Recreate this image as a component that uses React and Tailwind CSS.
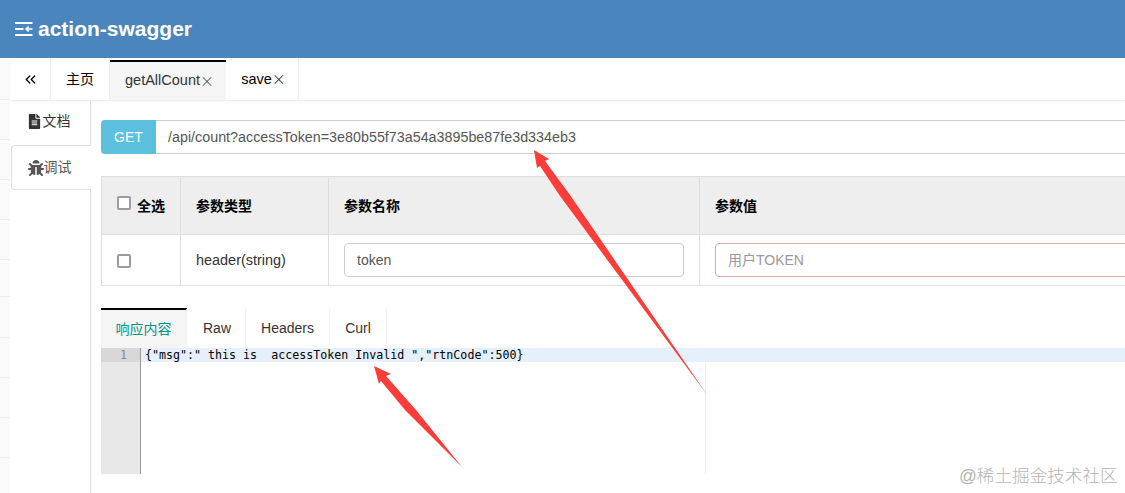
import { ChevronsLeft } from 'lucide-react';
import { FaBug, FaFileAlt } from 'react-icons/fa';

const STRIP_ROWS = [
  'h-[41px]',
  'h-[40px]',
  'h-[40px]',
  'h-[40px]',
  'h-[40px] bg-[#f0f0f0]',
  'h-[37px]',
  'h-[41px]',
  'h-[40px]',
  'h-[40px]',
  'h-[40px]',
];

const PageTab = ({ children, active, className }) => (
  <div
    className={`flex items-center justify-center border-r border-[#f0f0f0] ${
      active ? 'mt-[2px] border-t-2 border-t-black bg-[#f5f5f5]' : ''
    } ${className}`}
  >
    {children}
  </div>
);

const CloseMark = () => (
  <span className="mb-[3px] w-[11px] text-center text-[14px] leading-none font-['Noto_Sans_CJK_SC',sans-serif] font-light">×</span>
);

const ResTab = ({ children, active, className }) => (
  <div
    className={`flex items-center justify-center border-r border-[#f4f4f4] ${
      active ? 'border-t-2 border-t-black bg-[#f5f5f5] text-[#009688]' : 'text-[#333]'
    } ${className}`}
  >
    {children}
  </div>
);

const Checkbox = () => (
  <span className="block size-[14px] rounded-[2px] border-2 border-[#9b9ba6] bg-white" />
);

const App = () => {
  return (
    <div className="relative flex h-[493px] w-full flex-col overflow-hidden bg-white text-[14px] text-[#333] font-['Liberation_Sans','Noto_Sans_CJK_SC',sans-serif]">
      <header className="flex h-[58px] shrink-0 items-center gap-[5px] bg-[#4a86bd] pl-[15px] text-[21px] font-bold text-white">
        <svg width="18" height="16" viewBox="0 0 18 16" fill="none" stroke="currentColor" strokeWidth="2">
          <path d="M0 2h17.5M0 8h8.5M0 14h17.5" />
          <path d="M11 8h6.5" strokeWidth="1.5" />
          <path d="M13.8 5.6 11 8l2.8 2.4" strokeWidth="1.5" />
        </svg>
        <span>action-swagger</span>
      </header>

      <div className="flex min-h-0 flex-1">
        <div className="w-[11px] shrink-0">
          <div className="h-[1px]" />
          {STRIP_ROWS.map((row, i) => (
            <div key={i} className={`w-[10px] border-b border-[#ececec] bg-[#fafafa] ${row}`} />
          ))}
          <div className="h-[36px] w-[10px] bg-[#fafafa]" />
        </div>

        <main className="flex min-w-0 flex-1 flex-col">
          <div className="flex h-[43px] shrink-0 border-b border-[#eeeeee] text-black shadow-[0_1px_2px_rgba(0,0,0,0.04)]">
            <PageTab className="w-[40px]">
              <ChevronsLeft size={17} strokeWidth={1.8} />
            </PageTab>
            <PageTab className="w-[59px]">主页</PageTab>
            <PageTab active className="w-[116px] border-r-0 text-[14.5px] text-[#333]">
              getAllCount<CloseMark />
            </PageTab>
            <PageTab className="w-[73px] pt-[1px] text-[14.5px]">
              save<CloseMark />
            </PageTab>
          </div>

          <div className="flex min-h-0 flex-1">
            <aside className="flex w-[80px] shrink-0 flex-col border-r border-[#dddddd]">
              <div className="flex h-[44px] items-center justify-center gap-[1px] pb-[3px] pr-[4px] text-[#333]">
                <FaFileAlt size={15} />
                <span>文档</span>
              </div>
              <div className="-mr-[1px] flex h-[45px] items-center justify-center rounded-l-[4px] border border-r-0 border-[#dddddd] bg-white pr-[4px] text-[#555]">
                <FaBug size={16} />
                <span>调试</span>
              </div>
            </aside>

            <section className="min-w-0 flex-1 overflow-hidden pl-[10px]">
              <div className="mt-[19px] flex h-[34px] w-[1100px] text-[#555]">
                <div className="flex w-[55px] items-center justify-center rounded-l-[4px] bg-[#5bc0de] pt-[1px] text-white">GET</div>
                <div className="flex flex-1 items-center border-y border-[#cccccc] pl-[12px] pt-[1px] text-[14.32px]">
                  /api/count?accessToken=3e80b55f73a54a3895be87fe3d334eb3
                </div>
              </div>

              <div className="mt-[22px] w-[1100px] border border-[#dddddd]">
                <div className="grid h-[58px] grid-cols-[79px_148px_371px_1fr] border-b border-[#dddddd] bg-[#eeeeee] pt-[1px] font-bold text-black">
                  <div className="flex items-center gap-[6px] border-r border-[#dddddd] pl-[15px]">
                    <span className="-mt-[6px]"><Checkbox /></span>
                    <span>全选</span>
                  </div>
                  <div className="flex items-center border-r border-[#dddddd] pl-[15px]">参数类型</div>
                  <div className="flex items-center border-r border-[#dddddd] pl-[15px]">参数名称</div>
                  <div className="flex items-center pl-[15px]">参数值</div>
                </div>
                <div className="grid h-[50px] grid-cols-[79px_148px_371px_1fr]">
                  <div className="flex items-center border-r border-[#dddddd] pl-[15px] pt-[2px]">
                    <Checkbox />
                  </div>
                  <div className="flex items-center border-r border-[#dddddd] pl-[15px] pt-[2px] text-[14.45px]">header(string)</div>
                  <div className="flex items-center border-r border-[#dddddd] pl-[15px]">
                    <div className="flex h-[34px] w-[340px] items-center rounded-[4px] border border-[#cccccc] pl-[12px] pt-[1px] text-[#555]">
                      token
                    </div>
                  </div>
                  <div className="flex items-center pl-[15px]">
                    <div className="flex h-[34px] w-full items-center rounded-[4px] border border-[#e8a9a9] pl-[12px] pt-[1px] text-[#999]">
                      用户TOKEN
                    </div>
                  </div>
                </div>
              </div>

              <div className="mt-[22px] flex h-[40px] w-[1100px]">
                <ResTab active className="w-[86px]">响应内容</ResTab>
                <ResTab className="w-[59px] pl-[2px]">Raw</ResTab>
                <ResTab className="w-[84px]">Headers</ResTab>
                <ResTab className="w-[57px]">Curl</ResTab>
              </div>

              <div className="flex h-[126px] w-[1100px] text-[11.65px] leading-[14px] font-['DejaVu_Sans_Mono',monospace]">
                <div className="w-[40px] shrink-0 border-r border-[#999999] bg-[#e8e8e8]">
                  <div className="h-[14px] bg-[#d8d8d8] pr-[13px] text-right text-[#888]">1</div>
                </div>
                <div className="relative flex-1">
                  <div className="h-[14px] bg-[#e6f0fc] pl-[4px] whitespace-pre text-black">
                    {'{"msg":" this is  accessToken Invalid ","rtnCode":500}'}
                  </div>
                  <div className="absolute top-[14px] bottom-0 left-[564px] w-[1px] bg-[#eeeeee]" />
                </div>
              </div>
            </section>
          </div>
        </main>
      </div>

      {/* annotation arrows drawn on top of the screenshot */}
      <svg className="pointer-events-none absolute top-0 left-0" width="1125" height="493" fill="#fc3d39">
        <polygon points="534,150 549,159 545,161 570,195 708,396 560,196 540,166 537,168" />
        <polygon points="374,366 391,374 386,376 416,410 462,467 405,410 381,381 379,384" />
      </svg>

      <div className="absolute top-[463px] left-[959px] text-[17.6px] font-light whitespace-nowrap text-[#b4b4b4]">
        @稀土掘金技术社区
      </div>
    </div>
  );
};

export default App;
